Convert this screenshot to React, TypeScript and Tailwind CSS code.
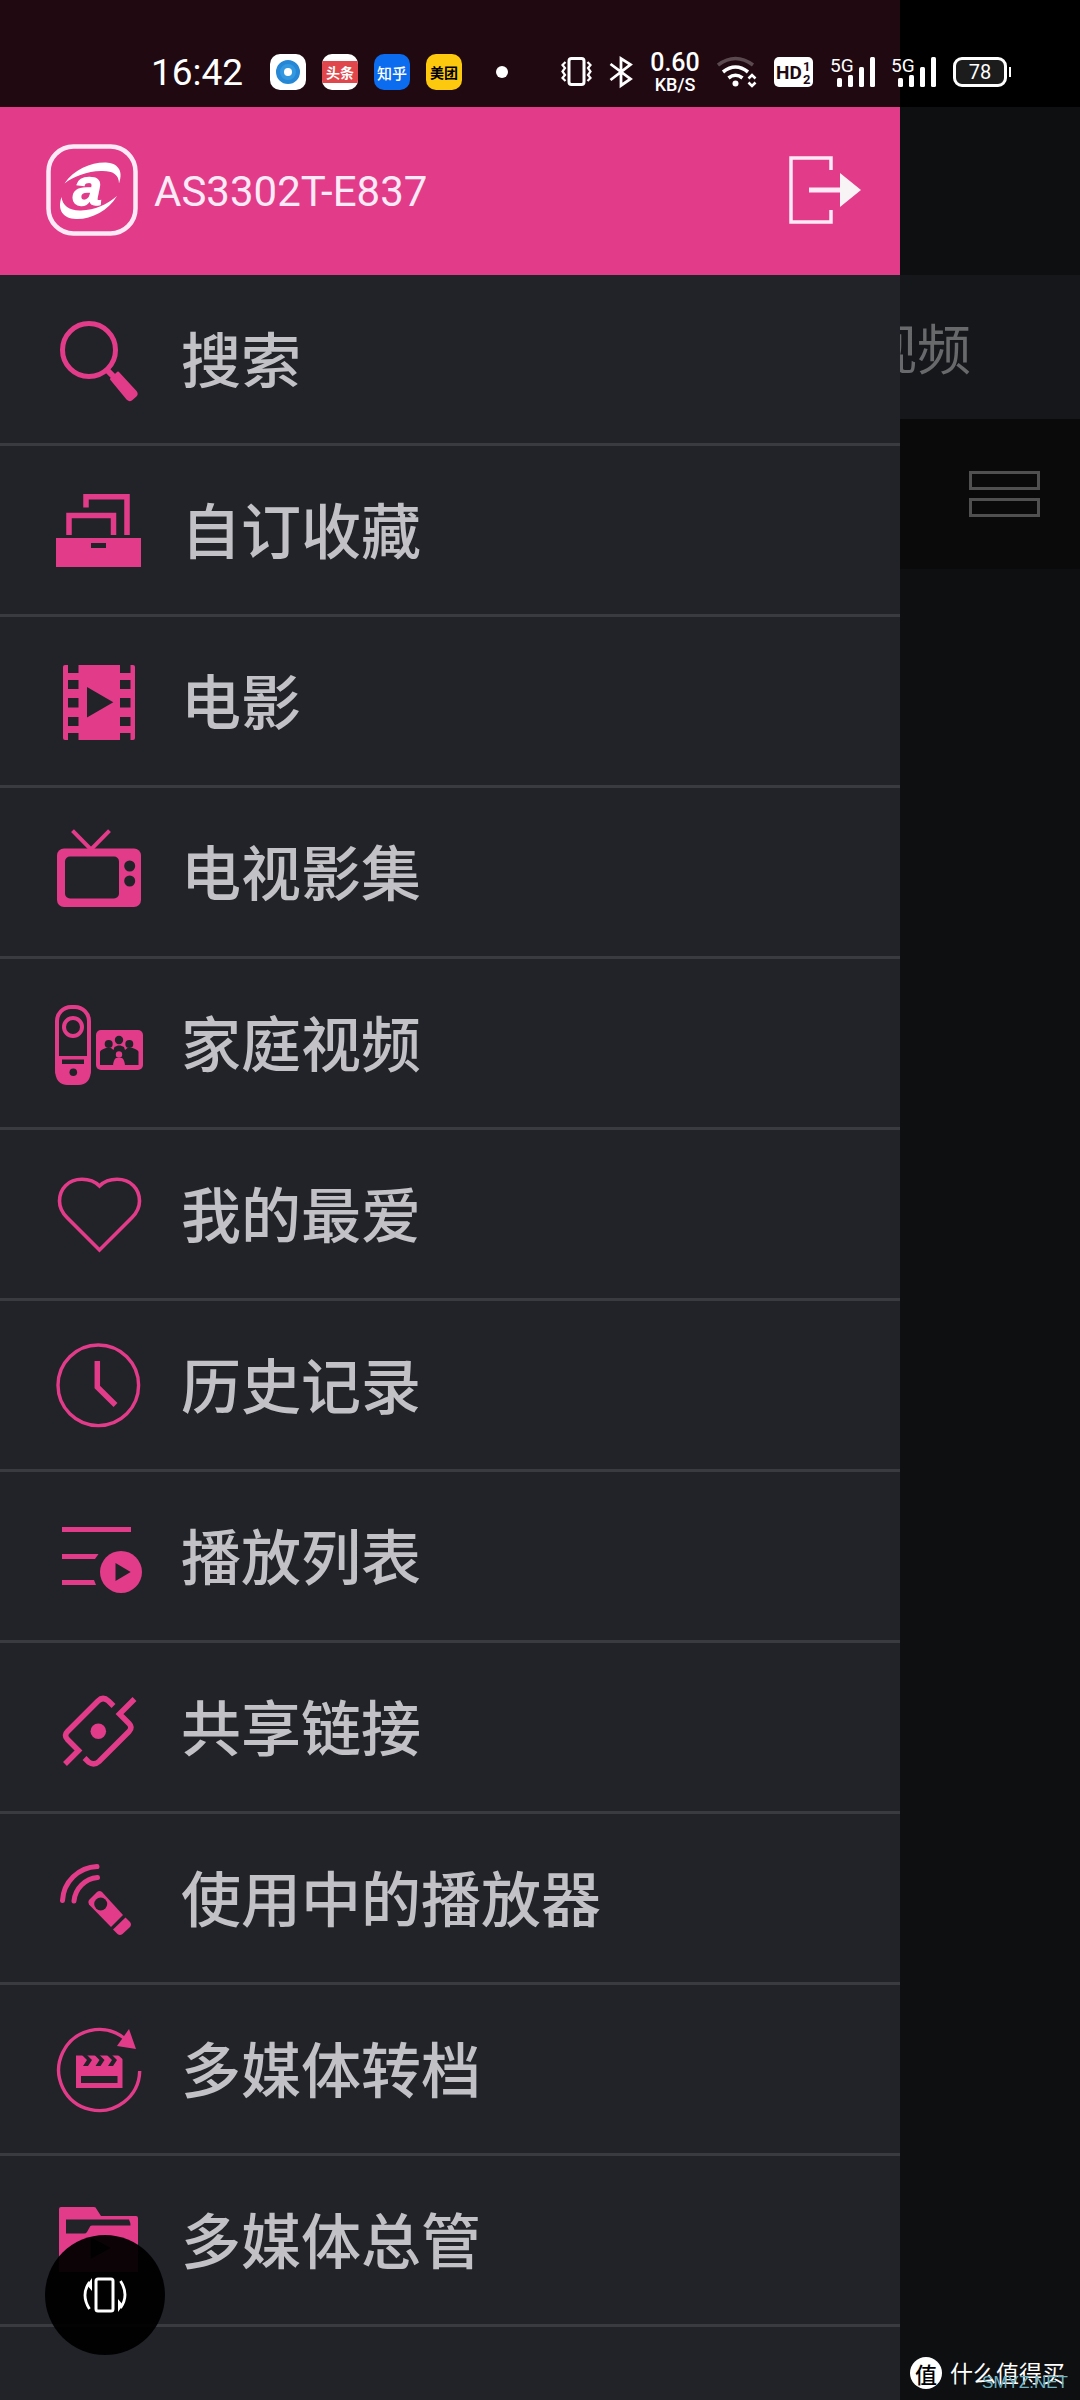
import type { ReactNode } from 'react';

const PINK = '#e23b89';
const DARK = '#212328';

interface MenuItem {
  label: string;
  icon: ReactNode;
}

const menuItems: MenuItem[] = [
  {
    label: '搜索',
    icon: (
      <>
        <circle cx="41" cy="41" r="26.500" fill="none" stroke={PINK} strokeWidth="5" />
        <path d="M59 61l7 7" stroke={PINK} strokeWidth="6" />
        <path d="M63 70l7-6.500L88 83q1.500 2-.5 4l-4 3.500q-2 1.500-4-.5z" fill={PINK} stroke={PINK} strokeWidth="2" strokeLinejoin="round" />
      </>
    ),
  },
  {
    label: '自订收藏',
    icon: (
      <>
        <path d="M38 27.500V16.700H79V55M21 55V35.500H65.500V55" fill="none" stroke={PINK} strokeWidth="5.500" />
        <rect x="8" y="58" width="85" height="29" fill={PINK} />
        <rect x="43" y="63" width="15" height="5" fill={DARK} />
      </>
    ),
  },
  {
    label: '电影',
    icon: (
      <>
        <rect x="15" y="14" width="72" height="75" rx="2" fill={PINK} />
        {[20, 72].map((x) => (
          <g key={x} fill={DARK}>
            <rect x={x} y="13" width="10.500" height="9" />
            <rect x={x} y="29" width="10.500" height="9" />
            <rect x={x} y="47" width="10.500" height="9.500" />
            <rect x={x} y="66" width="10.500" height="9" />
            <rect x={x} y="82" width="10.500" height="8" />
          </g>
        ))}
        <path d="M39 36l26.300 15.300L39 66.500z" fill={DARK} />
      </>
    ),
  },
  {
    label: '电视影集',
    icon: (
      <>
        <path d="M24.500 8.700L43 27.500L61.500 8.700" fill="none" stroke={PINK} strokeWidth="4" />
        <rect x="9" y="26.500" width="84" height="58.500" rx="7" fill={PINK} />
        <rect x="17" y="34.500" width="54" height="42" rx="5" fill={DARK} />
        <circle cx="81.700" cy="44" r="5.500" fill={DARK} />
        <circle cx="81.700" cy="59" r="5.500" fill={DARK} />
      </>
    ),
  },
  {
    label: '家庭视频',
    icon: (
      <>
        <path d="M7 63H43V76Q43 92 30 92H20Q7 92 7 76z" fill={PINK} />
        <rect x="9" y="14" width="32" height="76" rx="14" fill="none" stroke={PINK} strokeWidth="4" />
        <circle cx="25" cy="34" r="9" fill="none" stroke={PINK} strokeWidth="4" />
        <rect x="14" y="66.500" width="22" height="4.500" fill={DARK} />
        <circle cx="25.300" cy="79.300" r="3.800" fill={DARK} />
        <rect x="48" y="37" width="47" height="40" rx="5" fill={PINK} />
        <g fill={DARK}>
          <circle cx="60.700" cy="51" r="4" />
          <circle cx="71" cy="47" r="4.200" />
          <circle cx="81.300" cy="51" r="4" />
          <path d="M52 72V59q0-2 6-4h5l2.500 2 1-3 3.500-1.500h2.500l3.500 1.500 1 3 2.500-2h5q6 2 6 4v13z" />
        </g>
        <circle cx="71" cy="61.500" r="3.200" fill={PINK} />
        <path d="M65 72.500q.5-6 3-7.500h6q2.500 1.500 3 7.500z" fill={PINK} />
      </>
    ),
  },
  {
    label: '我的最爱',
    icon: (
      <path
        d="M51.500 22C46 16.500 40 15.300 34 15.300C20 15.300 11.500 25 11.500 37C11.500 44 14.500 49 19 53.500L51.500 86L84 53.500C88.500 49 91.500 44 91.500 37C91.500 25 83 15.300 69 15.300C63 15.300 57 16.500 51.500 22z"
        fill="none"
        stroke={PINK}
        strokeWidth="3.600"
      />
    ),
  },
  {
    label: '历史记录',
    icon: (
      <>
        <circle cx="50.300" cy="50.300" r="40.300" fill="none" stroke={PINK} strokeWidth="3.400" />
        <path d="M49.300 26V52L67.500 70" fill="none" stroke={PINK} strokeWidth="5.500" />
      </>
    ),
  },
  {
    label: '播放列表',
    icon: (
      <>
        <path d="M14 21H83V26H14zM14 48H50.500L47 53H14zM14 74H46L48 79H14z" fill={PINK} />
        <circle cx="73" cy="66" r="21" fill={PINK} />
        <path d="M67.500 57L82.700 66L67.500 75z" fill={DARK} />
      </>
    ),
  },
  {
    label: '共享链接',
    icon: (
      <>
        <g fill="none" stroke={PINK} strokeWidth="5.500">
          <path d="M65.500 29L60.500 24Q55 19 50 24L19.500 54.500Q15.500 58.500 19.500 62.500L30.500 73.500L17 87" />
          <path d="M36.500 81L40.500 85Q46 89 51 84.500L81 54.500Q85 50.500 81 46.500L71.500 37L86.500 22" />
        </g>
        <circle cx="50.300" cy="54.300" r="7.800" fill={PINK} />
      </>
    ),
  },
  {
    label: '使用中的播放器',
    icon: (
      <>
        <g fill="none" stroke={PINK} strokeWidth="5" strokeLinecap="round">
          <path d="M14.500 52.500A36 36 0 0 1 49 18.500" />
          <path d="M26 53A26 26 0 0 1 49.500 29.500" />
        </g>
        <path d="M41 56.500Q39.500 54 41 52L49 44Q51.500 42 54 44L75 67L63 79z" fill={PINK} />
        <circle cx="52.700" cy="56" r="6.500" fill={DARK} />
        <path d="M77.500 69.500L82 74Q84 76.500 82 79L74.500 86Q72 88 69.500 86L65 81.500z" fill={PINK} />
      </>
    ),
  },
  {
    label: '多媒体转档',
    icon: (
      <>
        <path d="M91.700 52A40.500 40.500 0 1 1 76 19" fill="none" stroke={PINK} strokeWidth="3.400" />
        <path d="M81 10L88 30L69 27z" fill={PINK} />
        <rect x="28" y="36.500" width="46.500" height="32.500" fill={PINK} />
        <path d="M34 36h5l5 5-4 6h-5l4-6zM46.500 36h5l5 5-4 6h-5l4-6zM59 36h5l5 5-4 6h-5l4-6zM70 36h5v4.500z" fill={DARK} />
        <rect x="33" y="57" width="36.500" height="7" fill={DARK} />
      </>
    ),
  },
  {
    label: '多媒体总管',
    icon: (
      <>
        <path d="M11 19q0-2 2-2H46q2 0 2.500 2L53 26H88q2 0 2 2V82H11z" fill={PINK} />
        <path d="M18 29.500H81q1.500 3 1.500 6H44q-2 0-2.500 2L39 42q-1 1.500-3 1.500H18z" fill={DARK} />
        <path d="M42.500 47L63 58L42.500 69z" fill={DARK} />
      </>
    ),
  },
];

function Signal() {
  return (
    <svg className="w-11 h-9" viewBox="0 0 44 36" fill="#fff">
      <text x="-1" y="18" fontSize="19" fontFamily="Roboto, sans-serif">5G</text>
      <rect x="6" y="24" width="5" height="9" rx="1.500" />
      <rect x="17" y="21" width="5" height="12" rx="1.500" />
      <rect x="28" y="13" width="5" height="20" rx="1.500" />
      <rect x="39" y="3" width="5" height="30" rx="1.500" />
    </svg>
  );
}

function StatusBar() {
  return (
    <header className="h-[107px] pt-9 pl-[151px] pr-[69px] flex justify-between items-start text-white bg-linear-to-r from-[#200911] from-[83.333%] to-black to-[83.333%]">
      <div className="flex items-center h-[74px] pb-0.5 gap-4">
        <span className="w-[103px] text-[37px] leading-none font-['Roboto',sans-serif]">16:42</span>
        <span className="size-9 rounded-[10px] bg-white flex items-center justify-center">
          <span className="size-6 rounded-full bg-[#3498e0] border-4 border-[#2587d6] flex items-center justify-center">
            <span className="size-2 rounded-full bg-white" />
          </span>
        </span>
        <span className="size-9 rounded-[10px] bg-white overflow-hidden flex items-center">
          <span className="w-full bg-[#e0474c] text-center text-sm leading-[22px] font-bold">头条</span>
        </span>
        <span className="size-9 rounded-[10px] bg-[#0b6cf0] flex items-center justify-center text-[15px] leading-none font-medium">知乎</span>
        <span className="size-9 rounded-[10px] bg-[#fcc90e] text-black flex items-center justify-center text-sm leading-none font-bold">美团</span>
        <span className="ml-[18px] size-3 rounded-full bg-white" />
      </div>

      <div className="flex items-center h-[74px] pb-0.5 gap-[17px]">
        {/* Vibrate */}
        <svg className="w-[31px] h-9" viewBox="0 0 31 36" fill="none" stroke="#fff">
          <rect x="8" y="4.500" width="15" height="26" rx="2.500" strokeWidth="3" />
          <path d="M4.500 8L1.500 11L4 14L1.500 17.500L4 21L1.500 24L4.500 27M26.500 8L29.500 11L27 14L29.500 17.500L27 21L29.500 24L26.500 27" strokeWidth="2.200" />
        </svg>
        <svg className="w-6 h-9" viewBox="0 0 24 36" fill="none" stroke="#fff" strokeWidth="2.800">
          <path d="M1.500 10L21.500 25L12 31.500V4.500L21.500 10.500L1.500 26" />
        </svg>
        <div className="w-[50px] pt-0.5 flex flex-col items-center font-['Roboto',sans-serif] font-medium">
          <span className="text-[25px] leading-6">0.60</span>
          <span className="text-lg leading-5">KB/S</span>
        </div>
        <svg className="w-10 h-9" viewBox="0 0 40 36" fill="none" stroke="#fff" strokeWidth="3.600">
          <path d="M1 11Q18.500-2 36 11" stroke="#5b4950" />
          <path d="M6 18Q18.500 8 31 18M11.500 24Q18.500 18.500 25.500 24" />
          <circle cx="18.500" cy="29.500" r="3" fill="#fff" stroke="none" />
          <path d="M31.500 24.500L35 21L38.500 24.500M31.500 28.500L35 32L38.500 28.500" strokeWidth="2.600" />
        </svg>
        <svg className="w-10 h-9" viewBox="0 0 40 36" fontFamily="Roboto, sans-serif" fontWeight="700" fill="#200911">
          <rect x="0" y="3" width="39" height="30" rx="5" fill="#fff" />
          <text x="2" y="25" fontSize="19">HD</text>
          <text x="29" y="17" fontSize="13">1</text>
          <text x="29" y="30" fontSize="13">2</text>
        </svg>
        <Signal />
        <Signal />
        <div className="w-[58px] flex items-center gap-0.5">
          <span className="w-[54px] h-[30px] rounded-[9px] border-3 border-white bg-[#1c1c1c] flex items-center justify-center text-xl leading-none font-['Roboto',sans-serif]">78</span>
          <span className="w-0.5 h-2.5 bg-white" />
        </div>
      </div>
    </header>
  );
}

function Logo() {
  return (
    <svg className="size-[92px] shrink-0" viewBox="0 0 92 92" fill="#fff">
      <rect x="2.500" y="2.500" width="87" height="87" rx="25" fill="none" stroke="#fdeaf6" strokeWidth="4.500" />
      <path d="M18.500 39.500C28 25 46 18 60 18.500C71 19 78 26 73 39.500C73 30 66 26.500 55 27C41 27.500 28 32 18.500 39.500z" />
      <path d="M71 52C62 67 45 75.500 30 75C17 74.500 11 66 15.500 53C16.500 62 24 67 35 66.500C49 66 61 60.500 71 52z" />
      <text x="27" y="61" fontSize="52" fontWeight="700" fontStyle="italic" fontFamily="'Liberation Sans', sans-serif" stroke="#fff" strokeWidth="1.500">a</text>
    </svg>
  );
}

function Drawer() {
  return (
    <aside className="w-5/6 shrink-0 bg-[#212328]">
      <div className="h-[168px] pl-[46px] pr-[39px] pb-0.5 flex items-center bg-[#e23b89]">
        <Logo />
        <h1 className="ml-4 pt-1 grow text-[42px] leading-none text-[#fdeaf6] font-['Roboto',sans-serif]">AS3302T-E837</h1>
        <button aria-label="退出" className="cursor-pointer">
          <svg className="w-[72px] h-[68px]" viewBox="0 0 72 68" fill="none" stroke="#fdeaf6">
            <path d="M42 14V2H2V66H42V54" strokeWidth="3.500" />
            <path d="M20 34H52" strokeWidth="5" />
            <path d="M51 17L72 34L51 51z" fill="#f8f4f6" stroke="none" />
          </svg>
        </button>
      </div>
      <nav>
        {menuItems.map((item) => (
          <a
            key={item.label}
            href="#"
            className="h-[171px] pl-12 flex items-center gap-[33px] border-b-3 border-[#3a3b40] text-[60px] leading-none font-medium text-[#c1c1c6]"
          >
            <svg className="size-25 shrink-0" viewBox="0 0 100 100">{item.icon}</svg>
            <span className="pb-1">{item.label}</span>
          </a>
        ))}
      </nav>
    </aside>
  );
}

export default function App() {
  return (
    <div className="relative min-h-screen flex flex-col bg-[#0e0f11] font-['Noto_Sans_CJK_SC',sans-serif]">
      <StatusBar />
      <div className="flex grow">
        <Drawer />

        {/* Dimmed page behind the drawer */}
        <main className="min-w-0 grow flex flex-col overflow-hidden">
          <div className="h-[168px]" />
          <div className="h-36 pr-[109px] flex items-center justify-end overflow-hidden whitespace-nowrap bg-[#16171b] text-[54px] leading-none text-[#68696b]">
            视频
          </div>
          <div className="h-[150px] pr-10 flex items-center justify-end bg-[#0a0a0a]">
            <button aria-label="列表显示" className="flex flex-col gap-2">
              <span className="w-[71px] h-[19px] border-3 border-[#505050]" />
              <span className="w-[71px] h-[19px] border-3 border-[#505050]" />
            </button>
          </div>
          <div className="relative mt-auto mb-[11px] pl-2.5 flex items-center gap-2 whitespace-nowrap text-white">
            <span className="size-8 rounded-full bg-white text-black flex items-center justify-center text-[22px] leading-none font-medium">值</span>
            <span className="pb-0.5 text-[23px] leading-none">什么值得买</span>
            <span className="absolute right-3 -bottom-0.5 text-[17px] leading-none text-[#6fb4c2] font-['Liberation_Sans',sans-serif]">SMYZ.NET</span>
          </div>
        </main>
      </div>

      <button aria-label="旋转屏幕" className="absolute left-[45px] bottom-[45px] size-30 rounded-full bg-black/95 flex items-center justify-center">
        <svg className="w-12 h-10" viewBox="0 0 48 40" fill="none" stroke="#fff">
          <rect x="15" y="4" width="17" height="32" rx="2" strokeWidth="3" />
          <path d="M8.500 34Q-.5 20 8.500 7M39.500 6Q48.500 20 39.500 33" strokeWidth="2.800" />
          <path d="M11 3V16L6 10zM37 37V24L42 30z" fill="#fff" stroke="none" />
        </svg>
      </button>
    </div>
  );
}
